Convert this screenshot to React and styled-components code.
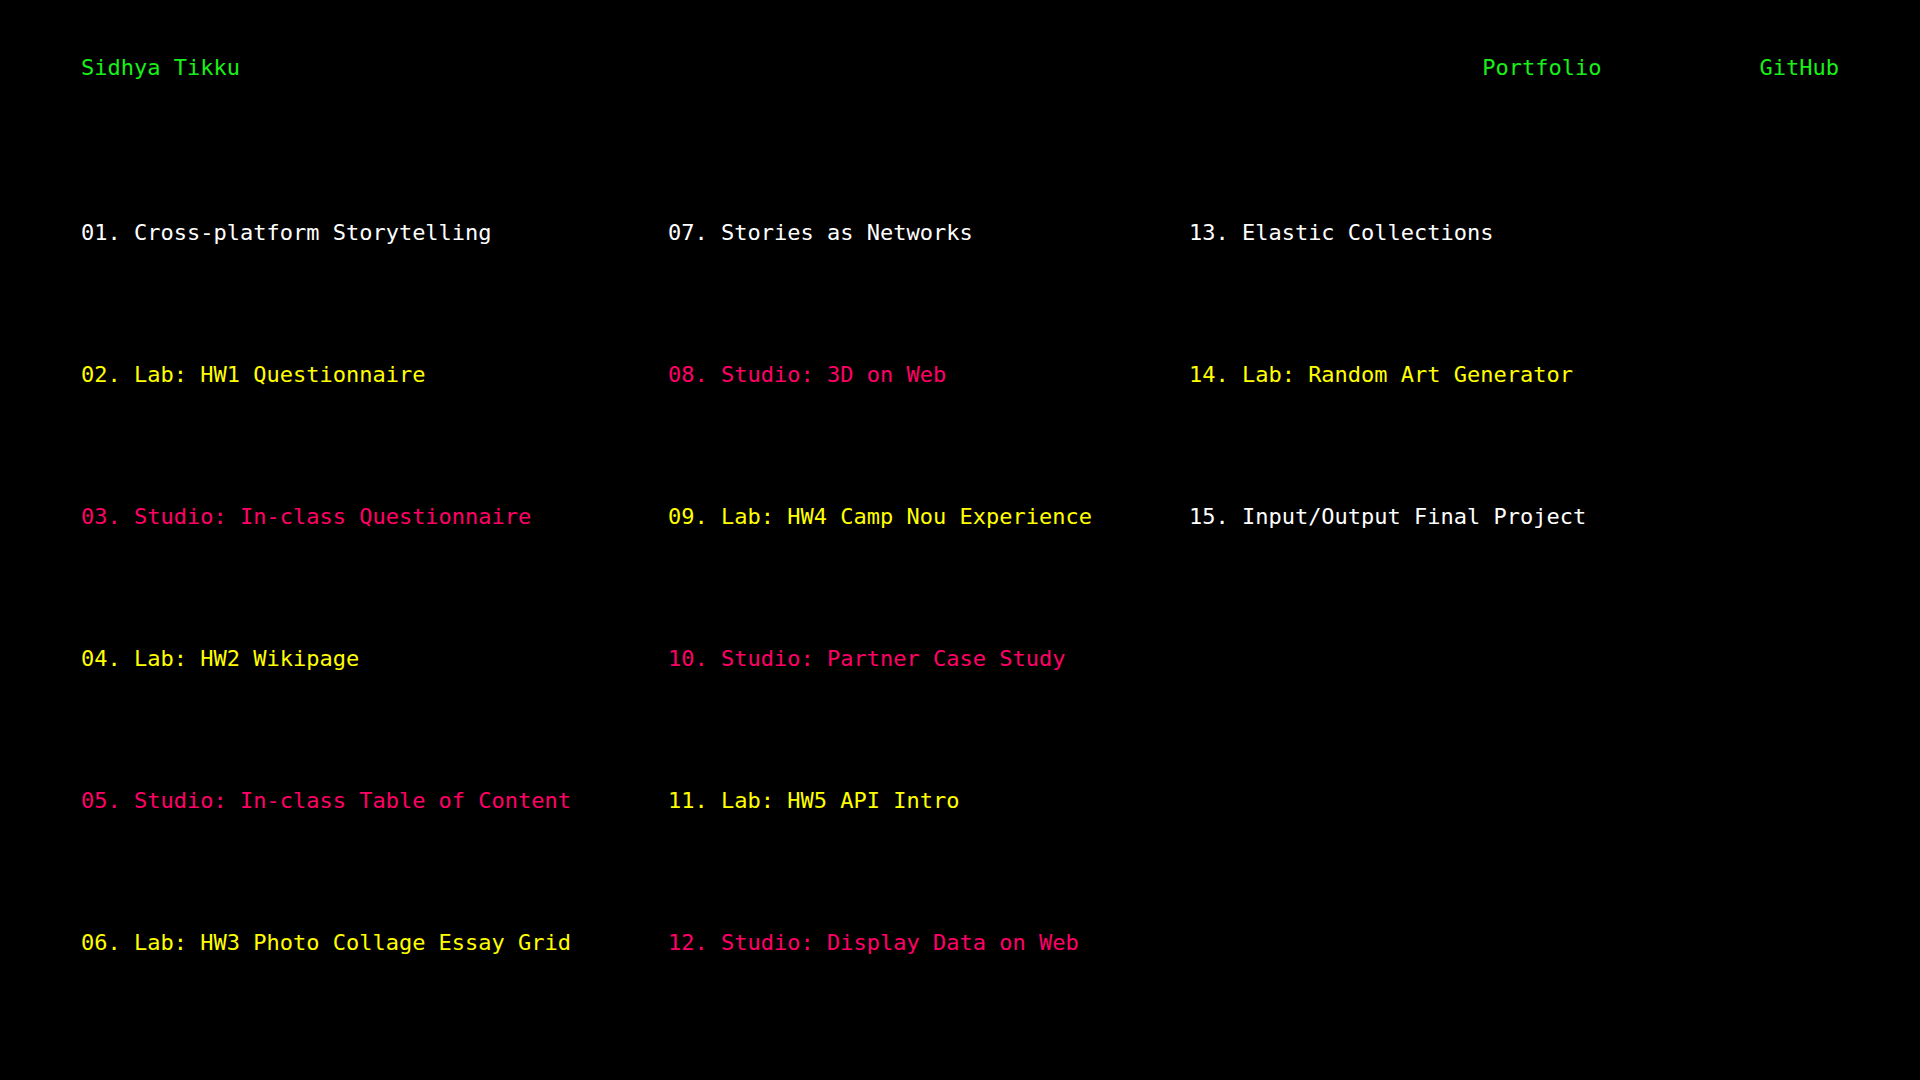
import styled, { createGlobalStyle } from "styled-components"

const GlobalStyle = createGlobalStyle`
  html, body {
    margin: 0;
    padding: 0;
    background: #000;
  }
  body {
    font-family: "DejaVu Sans Mono", "Liberation Mono", monospace;
    -webkit-font-smoothing: antialiased;
  }
`

const colors = {
  white: "#ffffff",
  yellow: "#ffff00",
  pink: "#ff0066",
}

const Page = styled.div`
  min-height: 1080px;
  background: #000;
  padding: 53px 81px 0;
  box-sizing: border-box;
`

const Header = styled.header`
  display: flex;
  align-items: center;
  height: 30px;
  font-size: 22px;
  line-height: 30px;
`

const Name = styled.a`
  color: #19f019;
  text-decoration: none;
  margin-right: auto;
`

const NavLink = styled.a`
  color: #19f019;
  text-decoration: none;
  margin-left: 158px;
`

const Columns = styled.main`
  display: flex;
  gap: 97px;
  margin-top: 78px;
`

const Column = styled.ul`
  list-style: none;
  margin: 0;
  padding: 0;
  display: flex;
  flex-direction: column;
`

const Item = styled.li`
  height: 142px;
  display: flex;
  align-items: center;
  font-size: 22px;
  white-space: pre;
  color: ${(p) => colors[p.$tone]};
`

const columns = [
  [
    ["01. Cross-platform Storytelling", "white"],
    ["02. Lab: HW1 Questionnaire", "yellow"],
    ["03. Studio: In-class Questionnaire", "pink"],
    ["04. Lab: HW2 Wikipage", "yellow"],
    ["05. Studio: In-class Table of Content", "pink"],
    ["06. Lab: HW3 Photo Collage Essay Grid", "yellow"],
  ],
  [
    ["07. Stories as Networks", "white"],
    ["08. Studio: 3D on Web", "pink"],
    ["09. Lab: HW4 Camp Nou Experience", "yellow"],
    ["10. Studio: Partner Case Study", "pink"],
    ["11. Lab: HW5 API Intro", "yellow"],
    ["12. Studio: Display Data on Web", "pink"],
  ],
  [
    ["13. Elastic Collections", "white"],
    ["14. Lab: Random Art Generator", "yellow"],
    ["15. Input/Output Final Project", "white"],
  ],
]

const App = () => {
  return (
    <Page>
      <GlobalStyle />
      <Header>
        <Name href="#">Sidhya Tikku</Name>
        <NavLink href="#">Portfolio</NavLink>
        <NavLink href="#">GitHub</NavLink>
      </Header>
      <Columns>
        {columns.map((col, i) => (
          <Column key={i}>
            {col.map(([label, tone]) => (
              <Item key={label} $tone={tone}>{label}</Item>
            ))}
          </Column>
        ))}
      </Columns>
    </Page>
  )
}

export default App
